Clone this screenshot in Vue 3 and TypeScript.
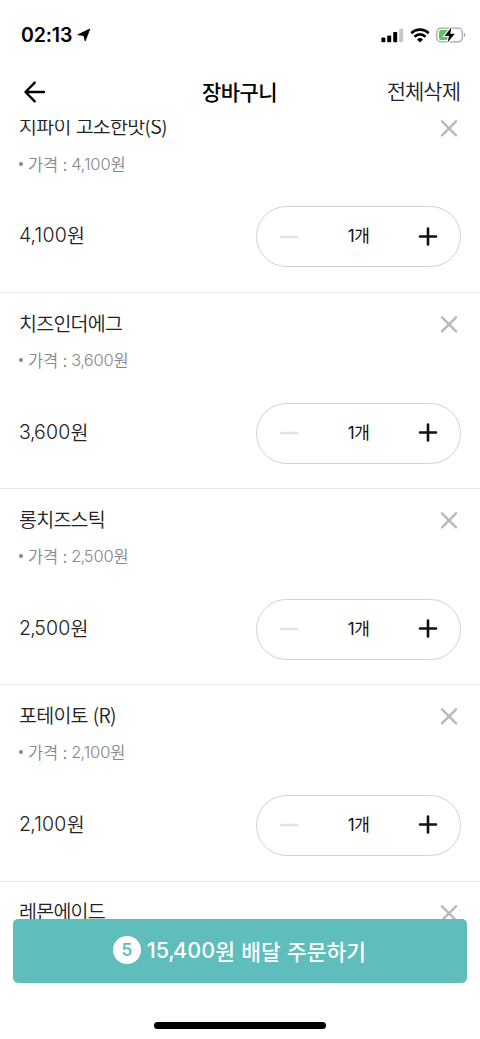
<script setup lang="ts">
interface CartItem {
  name: string
  price: string
}

const items: CartItem[] = [
  { name: '지파이 고소한맛(S)', price: '4,100' },
  { name: '치즈인더에그', price: '3,600' },
  { name: '롱치즈스틱', price: '2,500' },
  { name: '포테이토 (R)', price: '2,100' },
  { name: '레몬에이드', price: '3,000' },
]

const thousands = (price: string): string => price.split(',')[0]
const rest = (price: string): string => price.split(',')[1]
</script>

<template>
  <main class="screen">
    <div class="status">
      <span class="clock">02:13</span>
      <svg class="locate" width="14" height="14" viewBox="0 0 14 14"><path d="M12.800 1 8.200 13 6.800 7.500.8 6.800Z" fill="#000" stroke="#000" stroke-width=".8" stroke-linejoin="round" /></svg>
      <svg class="signal" width="23" height="15" viewBox="0 0 23 15">
        <rect x="0.4" y="9.500" width="4" height="4.700" rx="1" />
        <rect x="6.200" y="7.500" width="4" height="6.700" rx="1" />
        <rect x="12.200" y="4" width="4" height="10.200" rx="1" />
        <rect x="18.200" y="0.600" width="4" height="13.600" rx="1" fill="#c9c9c9" />
      </svg>
      <svg class="wifi" width="20" height="15" viewBox="0 0 20 15">
        <g fill="none" stroke="#000" stroke-width="2.700">
          <path d="M1.300 5.300a12.300 12.300 0 0 1 17.400 0" />
          <path d="M4.500 8.700a7.800 7.800 0 0 1 11 0" />
        </g>
        <path d="M7 11.500a4.400 4.400 0 0 1 6 0l-3 3Z" />
      </svg>
      <svg class="battery" width="30" height="16" viewBox="0 0 30 16">
        <rect x=".8" y="1.200" width="25.400" height="13.600" rx="4" fill="none" stroke="#a3a3a3" stroke-width="1.200" />
        <path d="M5 3h7.500v10H5A2 2 0 0 1 3 11V5a2 2 0 0 1 2-2Z" fill="#5dc466" />
        <path d="M27.800 5.600c1.800.8 1.800 4 0 4.800Z" fill="#a3a3a3" />
        <path d="M15.500.3 8.600 8.900h4.500l-1.600 6.700 7.400-8.800h-4.700Z" fill="#000" stroke="#fff" stroke-width="2.200" paint-order="stroke" />
      </svg>
    </div>

    <header class="bar">
      <svg class="back" width="22" height="22" viewBox="0 0 22 22" fill="none" stroke="#000" stroke-width="2.400" stroke-linecap="round" stroke-linejoin="round"><path d="M10.700 1.700 1.500 11l9.200 9.300M1.800 11h18.200" /></svg>
      <h1>장바구니</h1>
      <span class="clear">전체삭제</span>
    </header>

    <section class="list">
      <article v-for="item in items" :key="item.name" class="item">
        <div class="top">
          <h2>{{ item.name }}</h2>
          <svg class="close" width="18" height="18" viewBox="0 0 18 18" fill="none" stroke="#b9b9b9" stroke-width="2.400" stroke-linecap="round"><path d="m2 2.300 14 14M16 2.300 2 16.300" /></svg>
        </div>
        <p class="unit"><i class="dot"></i><span class="label">가격 :</span><span class="num">{{ thousands(item.price) }}<span class="comma">,</span>{{ rest(item.price) }}</span><span>원</span></p>
        <div class="row">
          <p class="total"><span class="num">{{ thousands(item.price) }}<span class="comma">,</span>{{ rest(item.price) }}</span><span>원</span></p>
          <div class="stepper">
            <svg width="20" height="20" viewBox="0 0 20 20" stroke="#e2e2e2" stroke-width="2.600" stroke-linecap="round"><path d="M2 10h16" /></svg>
            <span class="qty"><span class="one">1</span>개</span>
            <svg width="20" height="20" viewBox="0 0 20 20" stroke="#111" stroke-width="2.600" stroke-linecap="round"><path d="M2 9.500h16M10 1.500v16" /></svg>
          </div>
        </div>
      </article>
    </section>

    <button class="order">
      <span class="count">5</span>
      <span class="sum">15<span class="comma">,</span>400</span><span class="action">원 배달 주문하기</span>
    </button>
    <div class="home"></div>
  </main>
</template>

<style>
html,
body {
  background: #fff;
}
</style>

<style scoped>
.screen {
  width: 480px;
  height: 1039px;
  overflow: hidden;
  background: #fff;
  color: #222;
  font-family: "Noto Sans CJK KR", sans-serif;
  display: flex;
  flex-direction: column;
}
h1, h2, p { margin: 0; font-weight: 400; }
svg { display: block; flex: none; }
.status {
  height: 70px;
  flex: none;
  box-sizing: border-box;
  padding: 0 14px 0 21px;
  display: flex;
  align-items: center;
}
.clock {
  font: 600 19.500px/24px Inter, sans-serif;
  letter-spacing: -0.150px;
  color: #000;
}
.locate { margin-left: 5px; }
.signal { margin-left: auto; }
.wifi { margin-left: 6px; }
.battery { margin-left: 6px; }
.bar {
  height: 50px;
  flex: none;
  box-sizing: border-box;
  padding: 0 20px 6px 24px;
  display: grid;
  grid-template-columns: 178px auto 1fr;
  align-items: center;
}
h1 {
  font-size: 21px;
  line-height: 30px;
  margin-bottom: 3px;
  font-weight: 500;
  letter-spacing: -0.600px;
  color: #000;
}
.clear {
  justify-self: end;
  font-size: 21px;
  line-height: 30px;
  margin-bottom: 4px;
  font-weight: 350;
  letter-spacing: -1px;
}
.list {
  height: 799px;
  flex: none;
  overflow: hidden;
}
.item {
  height: 196.200px;
  box-sizing: border-box;
  border-bottom: 1.500px solid #e7e7e7;
  padding: 15px 19px 0;
}
.item:first-child { margin-top: -23.200px; }
.top {
  height: 32px;
  display: flex;
  justify-content: space-between;
  align-items: center;
}
h2 {
  font-size: 19.500px;
  line-height: 30px;
  margin-bottom: 3px;
  font-weight: 350;
  letter-spacing: -0.750px;
  word-spacing: 1.500px;
}
.close { margin-right: 3px; }
.unit {
  height: 26px;
  margin-top: 7px;
  display: flex;
  align-items: center;
  font-size: 16.500px;
  line-height: 26px;
  font-weight: 350;
  color: #888;
}
.dot {
  width: 4px;
  height: 4px;
  border-radius: 50%;
  background: #888;
  margin-right: 5px;
}
.label { letter-spacing: -0.300px; word-spacing: 1.500px; margin-right: 4.500px; }
.num {
  font-family: Inter, sans-serif;
  font-weight: 300;
  letter-spacing: -0.010em;
}
.comma { letter-spacing: -0.080em; margin-left: -0.050em; }
.row {
  margin-top: 29.500px;
  height: 61px;
  display: flex;
  justify-content: space-between;
  align-items: center;
}
.total {
  display: flex;
  font-size: 19.500px;
  font-weight: 350;
  line-height: 30px;
  margin-bottom: 3px;
}
.total .num { font-weight: 350; letter-spacing: 0.012em; }
.total .comma { letter-spacing: -0.080em; }
.stepper {
  width: 205px;
  height: 61px;
  box-sizing: border-box;
  border: 1.300px solid #d2d2d2;
  border-radius: 31px;
  padding: 0 22px;
  display: flex;
  align-items: center;
  justify-content: space-between;
}
.qty {
  font-size: 17px;
  line-height: 26px;
  margin-bottom: 2px;
  letter-spacing: -0.500px;
  color: #111;
}
.one { font-family: Inter, sans-serif; }
.order {
  width: 454px;
  height: 64px;
  flex: none;
  margin: 0 13px;
  padding: 0 1px 2px 0;
  border: 0;
  border-radius: 5px;
  background: #5fbdbc;
  color: #fff;
  font-family: inherit;
  font-size: 21.500px;
  font-weight: 500;
  display: flex;
  align-items: center;
  justify-content: center;
}
.count {
  width: 28px;
  height: 28px;
  border-radius: 50%;
  background: #fff;
  color: #5fbdbc;
  font: 600 17px/28px Inter, sans-serif;
  margin-right: 6px;
}
.sum {
  font-family: Inter, sans-serif;
  font-weight: 550;
  letter-spacing: 0.005em;
}
.action { word-spacing: 1.400px; }
.home {
  width: 172px;
  height: 6.500px;
  flex: none;
  border-radius: 4px;
  background: #000;
  margin: 39px 0 0 154px;
}
</style>
